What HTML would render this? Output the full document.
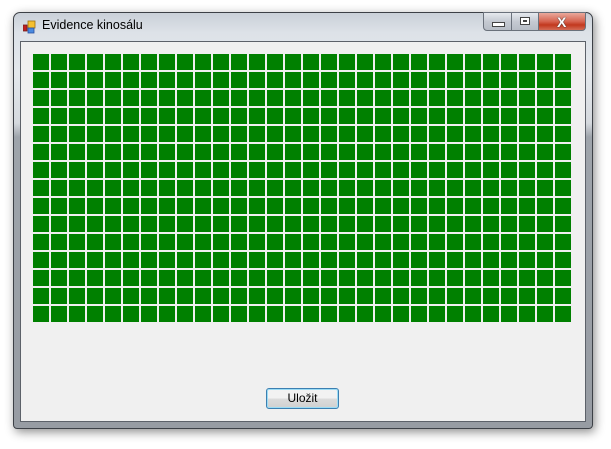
<!DOCTYPE html>
<html><head><meta charset="utf-8"><style>
body{margin:0;width:611px;height:449px;background:#fff;position:relative;overflow:hidden;font-family:"Segoe UI","Liberation Sans",sans-serif}
.win{position:absolute;left:13px;top:12px;width:580px;height:417px;border:1px solid #3c4046;border-radius:7px 7px 4px 4px;box-sizing:border-box;
background:linear-gradient(to bottom,#c9d0d8 0px,#dde2e8 20px,#e4e8ec 60px,#d5d9de 110px,#9ea4ab 124px,#979ca3 100%);
box-shadow:2px 3px 10px rgba(0,0,0,.45)}
.title{position:absolute;left:42px;top:18px;font-size:12.5px;color:#000}
.client{position:absolute;left:20px;top:41px;width:566px;height:381px;background:#f0f0f0;border:1px solid #5c6169;box-sizing:border-box}
.grid{position:absolute;left:33px;top:54px;width:540px;height:270px;
background-image:linear-gradient(to right,transparent 16px,#f0f0f0 16px),linear-gradient(to bottom,transparent 16px,#f0f0f0 16px);
background-size:18px 18px;background-color:#008000}
.btn{position:absolute;top:12px;height:19px;box-sizing:border-box;border:1px solid #6a717b;}
.btn.min{left:483px;width:29px;border-radius:0 0 0 4px;background:linear-gradient(#e6e9ee,#c5cad2 50%,#b7bdc6)}
.btn.max{left:511px;width:28px;background:linear-gradient(#e6e9ee,#c5cad2 50%,#b7bdc6)}
.btn.cls{left:538px;width:48px;border-radius:0 0 4px 0;background:linear-gradient(#e9a99c,#d6634f 50%,#c2381e 70%,#d46b55)}
.ok{position:absolute;left:266px;top:388px;width:73px;height:21px;box-sizing:border-box;border:1px solid #3c7fb1;border-radius:3px;
background:linear-gradient(#f2f2f2 50%,#dcdcdc 50%,#d0d0d0);box-shadow:inset 0 0 0 1px #9cdcf5;font-size:12px;text-align:center;line-height:19px;color:#000}
</style></head><body>
<div class="win"></div>
<svg style="position:absolute;left:23px;top:20px" width="14" height="14"><rect x="0" y="5" width="4" height="6" fill="#c02020" stroke="#702020" stroke-width=".8"/><rect x="5" y="1" width="7" height="7" fill="#f5c030" stroke="#a07010" stroke-width=".8"/><rect x="5" y="8" width="6" height="5" fill="#4a8ae0" stroke="#2a50a0" stroke-width=".8"/></svg>
<div class="title">Evidence kinosálu</div>
<div class="btn min"><div style="position:absolute;left:8px;top:9px;width:11px;height:3px;background:#fff;border:1px solid #444"></div></div>
<div class="btn max"><div style="position:absolute;left:8px;top:4px;width:8px;height:6px;background:#fff;border:1px solid #444;box-shadow:inset 0 0 0 2px #fff,inset 0 0 0 3px #444"></div></div>
<div class="btn cls"><div style="position:absolute;left:18px;top:1px;font:bold 14px 'Liberation Sans',sans-serif;color:#fff;text-shadow:0 0 1px #333,0 0 1px #333">X</div></div>
<div class="client"></div>
<div class="grid"></div>
<div class="ok">Uložit</div>
</body></html>
